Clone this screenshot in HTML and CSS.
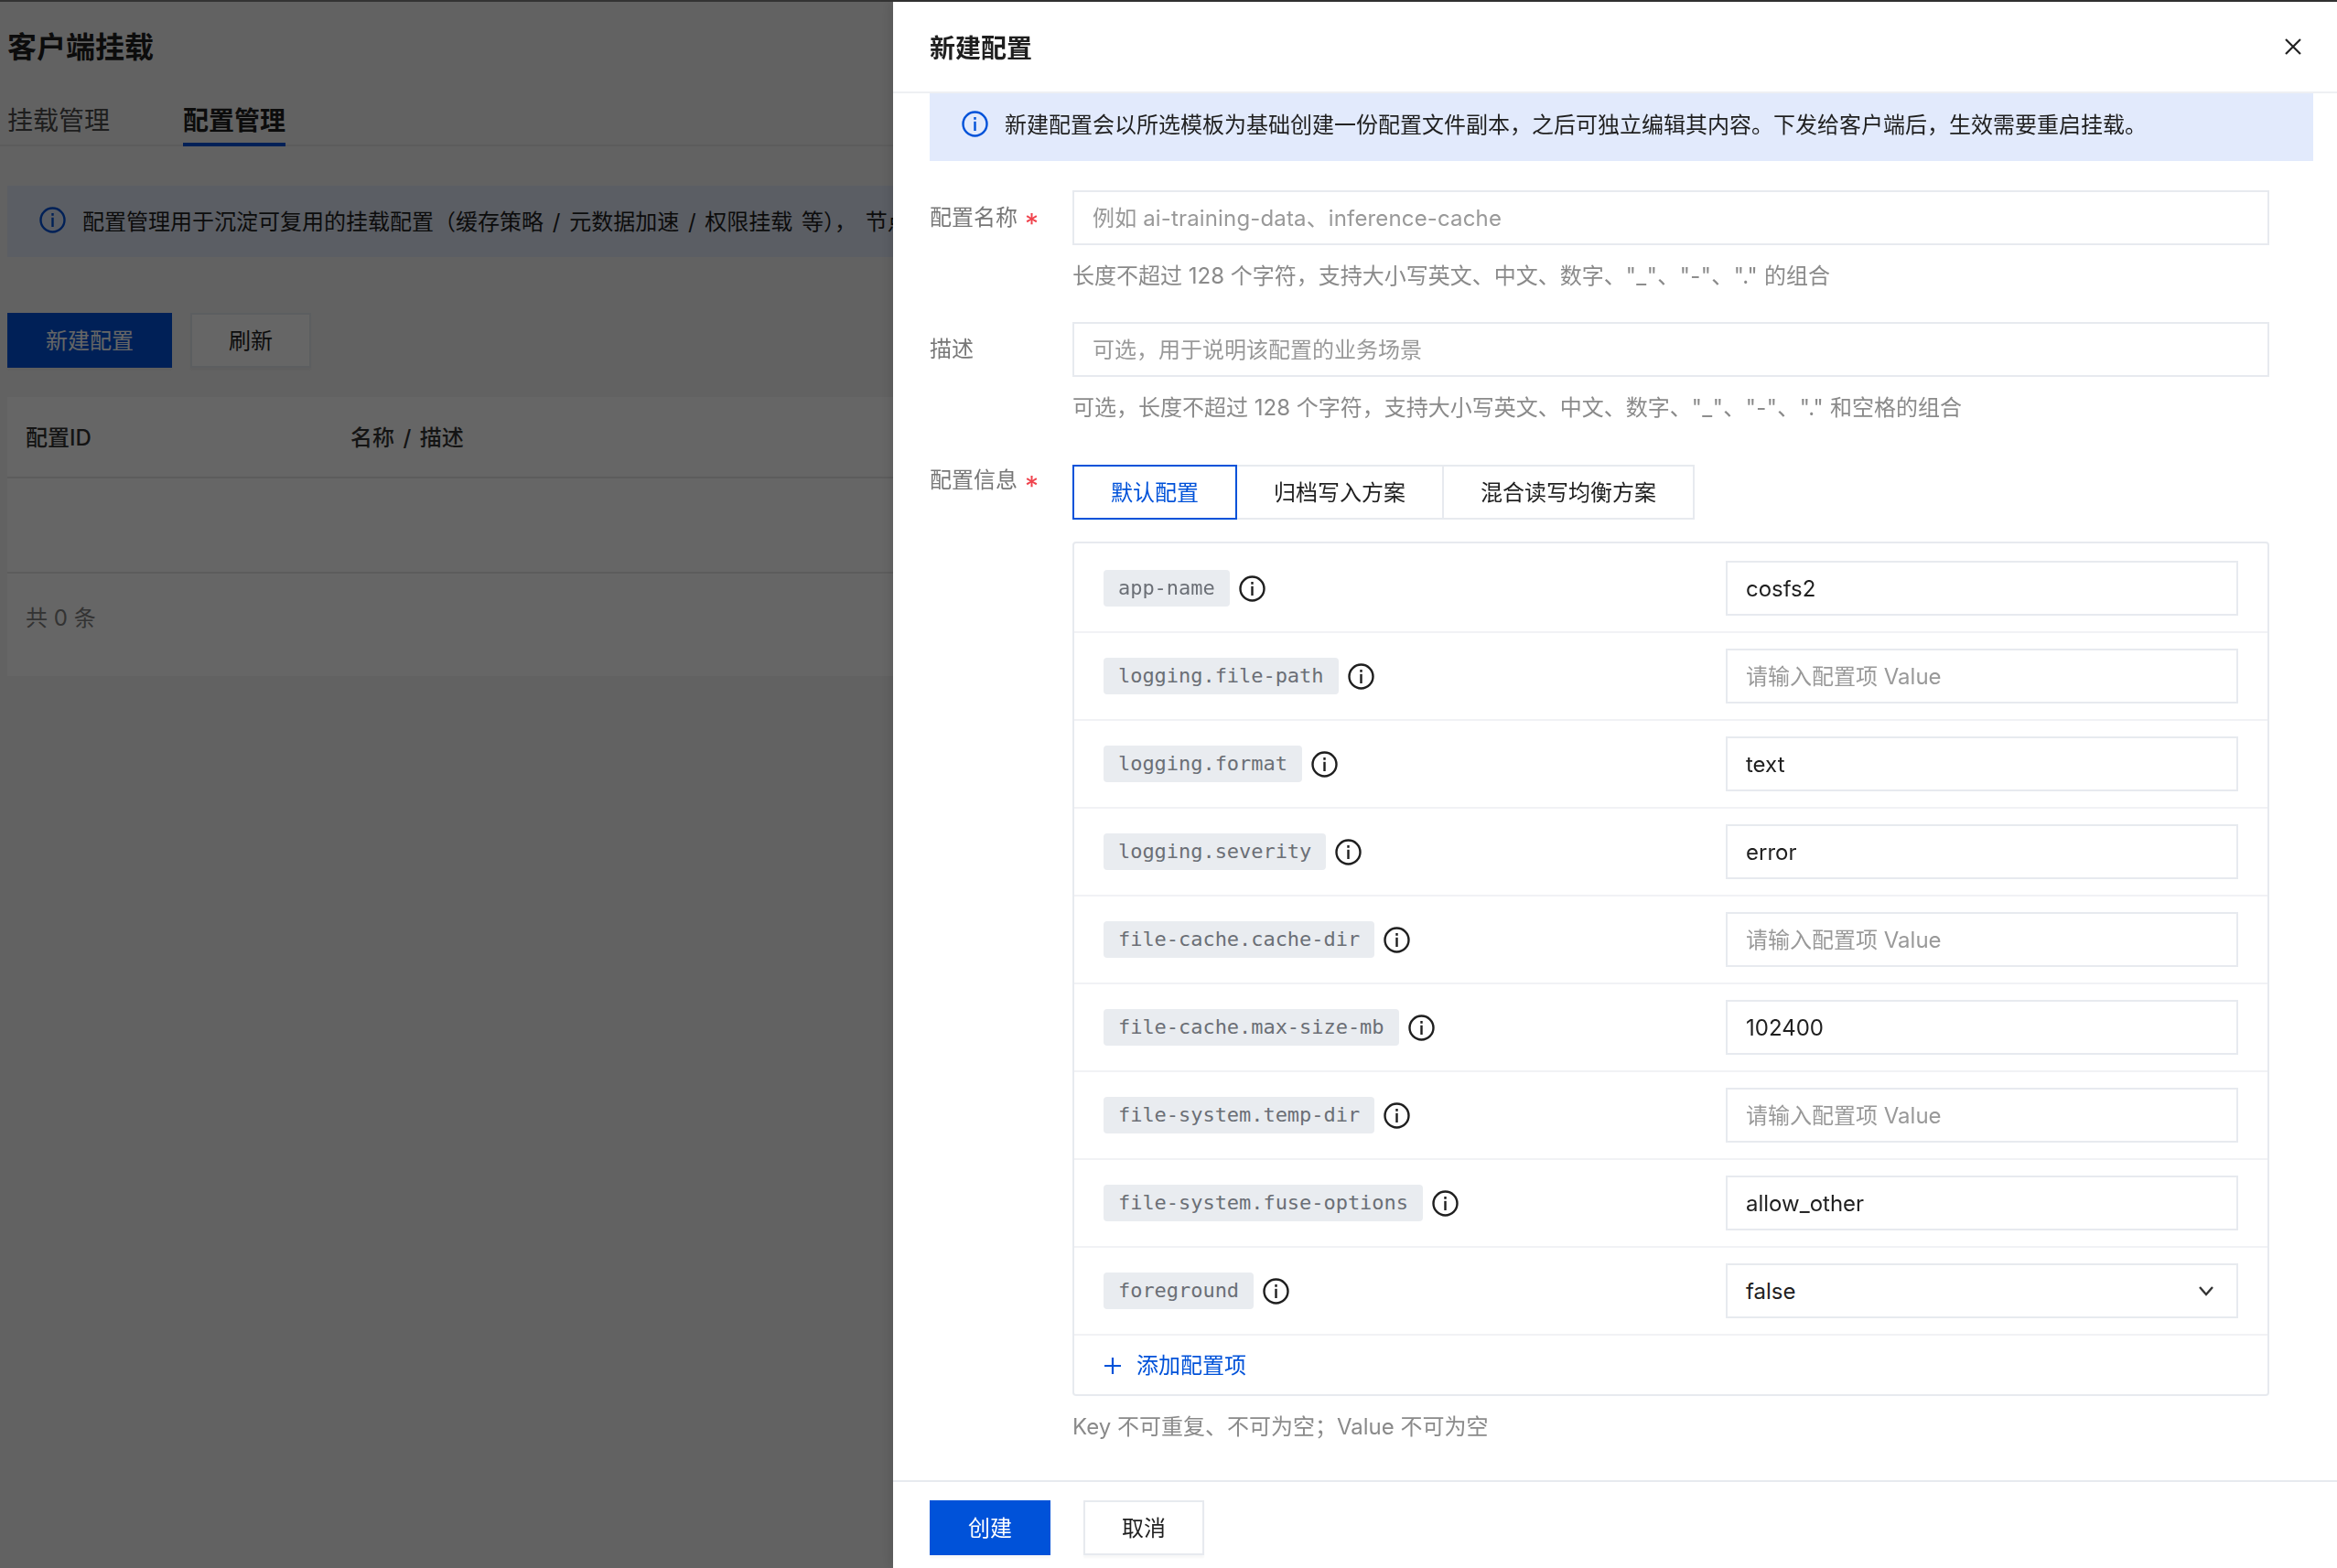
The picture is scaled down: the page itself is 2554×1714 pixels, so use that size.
FILE: index.html
```html
<!DOCTYPE html>
<html lang="zh-CN">
<head>
    <meta charset="UTF-8">
    <meta name="viewport" content="width=device-width, initial-scale=1.0">
    <title>客户端挂载</title>
    <link rel="stylesheet" href="styles.css">
</head>
<body>

<svg class="icon-defs" aria-hidden="true">
    <symbol id="icon-info" viewBox="0 0 29 29">
        <circle cx="14.5" cy="14.5" r="13" fill="none" stroke="currentColor" stroke-width="2.4"/>
        <rect x="13.3" y="7" width="2.4" height="2.8" fill="currentColor"/>
        <rect x="13.3" y="11.8" width="2.4" height="10.2" fill="currentColor"/>
    </symbol>
</svg>

<!-- page behind the drawer -->
<div class="page">
    <h1 class="page-title">客户端挂载</h1>
    <div class="page-tabs">
        <span class="page-tab">挂载管理</span>
        <span class="page-tab active">配置管理</span>
    </div>
    <div class="page-alert">
        <svg class="icon-info"><use href="#icon-info"/></svg>
        <span>配置管理用于沉淀可复用的挂载配置（缓存策略 / 元数据加速 / 权限挂载 等）， 节点</span>
    </div>
    <div class="page-actions">
        <button class="btn btn-primary btn-wide">新建配置</button>
        <button class="btn btn-default">刷新</button>
    </div>
    <div class="table">
        <div class="table-head">
            <span class="col-id">配置ID</span>
            <span>名称 / 描述</span>
        </div>
        <div class="table-empty"></div>
        <div class="table-foot">共 0 条</div>
    </div>
</div>

<div class="overlay"></div>

<!-- drawer -->
<div class="drawer">
    <div class="drawer-header">
        <h2 class="drawer-title">新建配置</h2>
        <svg class="icon-close" viewBox="0 0 18 18"><path d="M1 1 L17 17 M17 1 L1 17" fill="none" stroke="currentColor" stroke-width="2.2"/></svg>
    </div>

    <div class="drawer-body">
        <div class="alert">
            <svg class="icon-info"><use href="#icon-info"/></svg>
            <span class="alert-text">新建配置会以所选模板为基础创建一份配置文件副本，之后可独立编辑其内容。下发给客户端后，生效需要重启挂载。</span>
        </div>

        <div class="form-item">
            <label class="form-label">配置名称<i class="required">*</i></label>
            <div class="form-control">
                <input class="input input-slug" type="text" placeholder="例如 ai-training-data、inference-cache">
                <p class="help">长度不超过 128 个字符，支持大小写英文、中文、数字、<span class="symbols">"_"、"-"、"."</span> 的组合</p>
            </div>
        </div>

        <div class="form-item">
            <label class="form-label">描述</label>
            <div class="form-control">
                <input class="input" type="text" placeholder="可选，用于说明该配置的业务场景">
                <p class="help">可选，长度不超过 128 个字符，支持大小写英文、中文、数字、<span class="symbols">"_"、"-"、"."</span> 和空格的组合</p>
            </div>
        </div>

        <div class="form-item form-item-config">
            <label class="form-label">配置信息<i class="required">*</i></label>
            <div class="form-control">
                <div class="tabs">
                    <span class="tab active">默认配置</span>
                    <span class="tab">归档写入方案</span>
                    <span class="tab">混合读写均衡方案</span>
                </div>

                <div class="config-box">
                    <div class="config-row">
                        <div class="config-key"><code class="chip">app-name</code><svg class="icon-info"><use href="#icon-info"/></svg></div>
                        <input class="input input-value" type="text" value="cosfs2">
                    </div>
                    <div class="config-row">
                        <div class="config-key"><code class="chip">logging.file-path</code><svg class="icon-info"><use href="#icon-info"/></svg></div>
                        <input class="input input-value" type="text" placeholder="请输入配置项 Value">
                    </div>
                    <div class="config-row">
                        <div class="config-key"><code class="chip">logging.format</code><svg class="icon-info"><use href="#icon-info"/></svg></div>
                        <input class="input input-value" type="text" value="text">
                    </div>
                    <div class="config-row">
                        <div class="config-key"><code class="chip">logging.severity</code><svg class="icon-info"><use href="#icon-info"/></svg></div>
                        <input class="input input-value" type="text" value="error">
                    </div>
                    <div class="config-row">
                        <div class="config-key"><code class="chip">file-cache.cache-dir</code><svg class="icon-info"><use href="#icon-info"/></svg></div>
                        <input class="input input-value" type="text" placeholder="请输入配置项 Value">
                    </div>
                    <div class="config-row">
                        <div class="config-key"><code class="chip">file-cache.max-size-mb</code><svg class="icon-info"><use href="#icon-info"/></svg></div>
                        <input class="input input-value" type="text" value="102400">
                    </div>
                    <div class="config-row">
                        <div class="config-key"><code class="chip">file-system.temp-dir</code><svg class="icon-info"><use href="#icon-info"/></svg></div>
                        <input class="input input-value" type="text" placeholder="请输入配置项 Value">
                    </div>
                    <div class="config-row">
                        <div class="config-key"><code class="chip">file-system.fuse-options</code><svg class="icon-info"><use href="#icon-info"/></svg></div>
                        <input class="input input-value" type="text" value="allow_other">
                    </div>
                    <div class="config-row">
                        <div class="config-key"><code class="chip">foreground</code><svg class="icon-info"><use href="#icon-info"/></svg></div>
                        <div class="input input-value select">
                            <span>false</span>
                            <svg class="icon-chevron" viewBox="0 0 18 12"><path d="M2 2 L9 10 L16 2" fill="none" stroke="currentColor" stroke-width="2.4"/></svg>
                        </div>
                    </div>
                    <div class="config-add">
                        <svg class="icon-plus" viewBox="0 0 18 18"><path d="M9 0 V18 M0 9 H18" fill="none" stroke="currentColor" stroke-width="2.2"/></svg>
                        <span>添加配置项</span>
                    </div>
                </div>
                <p class="help help-config">Key 不可重复、不可为空；Value 不可为空</p>
            </div>
        </div>
    </div>

    <div class="drawer-footer">
        <button class="btn btn-primary">创建</button>
        <button class="btn btn-default">取消</button>
    </div>
</div>

</body>
</html>
```

FILE: styles.css
```css
html, body {
    margin: 0;
    padding: 0;
    height: 100%;
    overflow: hidden;
}
body {
    font-family: Inter, "Noto Sans CJK SC", sans-serif;
    font-size: 24px;
    color: #1f1f1f;
    background-color: #f5f5f5;
    border-top: 2px solid #333;
    box-sizing: border-box;
}
.icon-defs {
    display: none;
}
.icon-info {
    width: 29px;
    height: 29px;
    flex-shrink: 0;
}

/* page behind the drawer */
.page {
    width: 2554px;
}
.page-title {
    margin: 0;
    padding: 27px 0 0 8px;
    font-size: 32px;
    line-height: 46px;
    font-weight: 600;
}
.page-tabs {
    display: flex;
    gap: 80px;
    margin-top: 37px;
    padding-left: 8px;
    border-bottom: 2px solid #e7e7e7;
    height: 46px;
}
.page-tab {
    font-size: 28px;
    line-height: 40px;
    color: #4b4b4b;
    height: 46px;
}
.page-tab.active {
    color: #1f1f1f;
    font-weight: 600;
    border-bottom: 4px solid #0052d9;
    height: 44px;
}
.page-alert {
    display: flex;
    align-items: center;
    gap: 18px;
    margin: 43px 0 0 8px;
    padding: 0 0 4px 35px;
    height: 74px;
    background-color: #e3eaf9;
    white-space: nowrap;
    word-spacing: 3px;
}
.page-alert .icon-info {
    color: #0052d9;
}
.page-actions {
    display: flex;
    gap: 20px;
    margin: 61px 0 0 8px;
}
.table {
    margin: 32px 0 0 8px;
    background-color: #fff;
}
.table-head {
    display: flex;
    align-items: center;
    height: 84px;
    padding: 0 0 3px 20px;
    border-bottom: 2px solid #e7e7e7;
    font-weight: 500;
    color: #333;
    word-spacing: 3px;
}
.col-id {
    width: 355px;
}
.table-empty {
    height: 102px;
    border-bottom: 2px solid #e7e7e7;
}
.table-foot {
    display: flex;
    align-items: center;
    height: 93px;
    padding: 0 0 19px 20px;
    color: #808080;
}

.overlay {
    position: fixed;
    top: 2px;
    left: 0;
    right: 0;
    bottom: 0;
    background-color: rgba(0, 0, 0, 0.6);
}

/* buttons */
.btn {
    width: 132px;
    height: 60px;
    padding: 0 0 4px;
    border: 2px solid #e7eaef;
    border-radius: 0;
    background-color: #fff;
    color: #1f1f1f;
    font-family: inherit;
    font-size: 24px;
    box-shadow: 0 3px 2px rgba(0, 0, 0, 0.03);
}
.btn-primary {
    border-color: #0052d9;
    background-color: #0052d9;
    color: #fff;
}
.btn-wide {
    width: 180px;
}

/* drawer */
.drawer {
    position: fixed;
    top: 2px;
    right: 0;
    bottom: 0;
    width: 1578px;
    background-color: #fff;
    display: flex;
    flex-direction: column;
    box-shadow: -4px 0 12px rgba(0, 0, 0, 0.1);
}
.drawer-header {
    display: flex;
    align-items: center;
    justify-content: space-between;
    height: 98px;
    flex-shrink: 0;
    padding: 0 39px 0 40px;
    border-bottom: 2px solid #eef0f3;
}
.drawer-title {
    margin: 0;
    font-size: 28px;
    font-weight: 600;
}
.icon-close {
    width: 18px;
    height: 18px;
    color: #222;
}
.drawer-body {
    flex: 1;
    overflow: hidden;
    padding: 0 26px 0 40px;
}
.alert {
    display: flex;
    align-items: center;
    gap: 18px;
    height: 66px;
    padding: 0 0 8px 35px;
    background-color: #e2eafc;
}
.alert .icon-info {
    color: #0052d9;
}
.alert-text {
    padding-bottom: 2px;
}

/* form */
.form-item {
    display: flex;
    margin-top: 32px;
    padding-right: 48px;
}
.form-item + .form-item {
    margin-top: 34px;
}
.form-item + .form-item-config {
    margin-top: 46px;
}
.form-label {
    width: 156px;
    flex-shrink: 0;
    line-height: 60px;
    color: #777;
}
.form-item-config .form-label {
    line-height: 34px;
}
.required {
    display: inline-block;
    margin-left: 8px;
    color: #f0424c;
    font-size: 30px;
    line-height: 1;
    font-style: normal;
    vertical-align: -9px;
}
.form-control {
    flex: 1;
    min-width: 0;
}
.input {
    display: block;
    width: 100%;
    height: 60px;
    box-sizing: border-box;
    padding: 0 20px;
    border: 2px solid #e7eaef;
    border-radius: 0;
    outline: none;
    font-family: inherit;
    font-size: 24px;
    color: #1f1f1f;
    background-color: #fff;
}
.input::placeholder {
    color: #999;
}
.input-slug::placeholder {
    letter-spacing: 0.15px;
}
.help {
    margin: 18px 0 0;
    line-height: 32px;
    color: #8a8a8a;
}
.symbols {
    letter-spacing: 0.4px;
}

.tabs {
    display: flex;
    height: 60px;
}
.tab {
    display: flex;
    align-items: center;
    box-sizing: border-box;
    padding: 0 40px 4px;
    margin-left: -2px;
    border: 2px solid #e7eaef;
}
.tab:first-child {
    margin-left: 0;
}
.tab.active {
    position: relative;
    border-color: #0052d9;
    color: #0052d9;
}

.config-box {
    margin-top: 24px;
    padding-top: 2px;
    border: 2px solid #e7eaef;
    border-radius: 4px;
}
.config-row {
    display: flex;
    align-items: center;
    justify-content: space-between;
    height: 96px;
    box-sizing: border-box;
    padding: 0 32px;
    border-bottom: 2px solid #f1f2f5;
}
.config-key {
    display: flex;
    align-items: center;
    gap: 10px;
}
.chip {
    height: 40px;
    line-height: 40px;
    padding: 0 16px;
    border-radius: 4px;
    background-color: #e9ecf0;
    color: #6b6f76;
    font-family: "DejaVu Sans Mono", "Liberation Mono", monospace;
    font-size: 22px;
    letter-spacing: -0.04px;
}
.input-value {
    width: 560px;
}
.select {
    display: flex;
    align-items: center;
    justify-content: space-between;
    padding-right: 24px;
}
.icon-chevron {
    width: 18px;
    height: 12px;
    color: #333;
}
.config-add {
    display: flex;
    align-items: center;
    gap: 17px;
    height: 61px;
    padding: 0 0 3px 33px;
    color: #0052d9;
}
.icon-plus {
    width: 18px;
    height: 18px;
    margin-top: 4px;
}
.help-config {
    margin-top: 18px;
}

.drawer-footer {
    display: flex;
    gap: 36px;
    flex-shrink: 0;
    height: 74px;
    padding: 20px 40px 0;
    border-top: 2px solid #e7eaef;
}
```
